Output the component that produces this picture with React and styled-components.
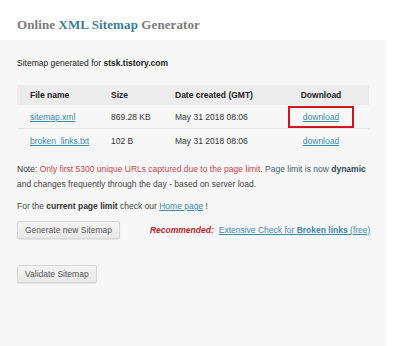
import React from "react";
import styled, { createGlobalStyle } from "styled-components";

const Global = createGlobalStyle`
  html, body { margin: 0; padding: 0; background: #fff; }
  body { font-family: "Liberation Sans", Arial, sans-serif; font-size: 8.5px; color: #333; }
`;

const Page = styled.div`
  width: 400px;
  height: 346px;
  overflow: hidden;
  display: flex;
  flex-direction: column;
`;

const Header = styled.div`
  height: 40px;
  box-sizing: border-box;
  padding: 17px 0 0 17px;
`;

const Title = styled.h1`
  margin: 0;
  font-family: "Liberation Serif", "Times New Roman", serif;
  font-weight: bold;
  font-size: 13px;
  line-height: 16px;
  color: #7a7a7a;
  letter-spacing: 0.1px;
`;

const TitleAccent = styled.span`
  color: #3b7d99;
`;

const Panel = styled.div`
  width: 386px;
  flex: 1;
  background: #f7f7f7;
  box-sizing: border-box;
  padding: 16px 17px 0 17px;
`;

const Intro = styled.p`
  margin: 0 0 15px 0;
  color: #222;
  line-height: 14px;
`;

const Table = styled.table`
  width: 352px;
  table-layout: fixed;
  border-collapse: collapse;
  margin-bottom: 10px;
`;

const Th = styled.th`
  background: #ececec;
  height: 20px;
  padding: 0 0 0 ${(p) => p.$pl || 0}px;
  text-align: ${(p) => (p.$center ? "center" : "left")};
  font-weight: bold;
  color: #222;
  width: ${(p) => (p.$w ? `${p.$w}px` : "auto")};
`;

const Td = styled.td`
  height: 23px;
  padding: 0 0 0 ${(p) => p.$pl || 0}px;
  text-align: ${(p) => (p.$center ? "center" : "left")};
  color: #333;
  white-space: nowrap;
  border-bottom: ${(p) => (p.$last ? "none" : "1px solid #e6e6e6")};
`;

const Link = styled.a`
  color: #3a8aa8;
  text-decoration: underline;
  cursor: pointer;
`;

const Highlight = styled.span`
  display: inline-block;
  border: 2.5px solid #d0161f;
  padding: 4px 13px 4px;
  line-height: 10px;
`;

const Para = styled.p`
  margin: 0 0 ${(p) => p.$mb || 0}px 0;
  line-height: 14.5px;
  color: #444;
`;

const Red = styled.span`
  color: #c4454a;
`;

const Slate = styled.span`
  color: #3f5d69;
`;

const Strong = styled.b`
  color: ${(p) => p.$c || "#333"};
`;

const ActionRow = styled.div`
  display: flex;
  align-items: center;
  margin-top: 7px;
`;

const Button = styled.button`
  font-family: "Liberation Sans", Arial, sans-serif;
  font-size: 8.5px;
  color: #555;
  white-space: nowrap;
  background: linear-gradient(#f4f4f4, #e8e8e8);
  border: 1px solid #d6d6d6;
  border-radius: 2px;
  height: 18px;
  padding: 0 7px;
  box-shadow: 0 1px 1px rgba(0, 0, 0, 0.08);
`;

const Recommend = styled.div`
  margin-left: 30px;
  display: flex;
  gap: 5px;
  white-space: nowrap;
`;

const RedBold = styled.i`
  color: #b5252d;
  font-weight: bold;
`;

const Spacer = styled.div`
  height: 26px;
`;

export default function App() {
  return (
    <Page>
      <Global />
      <Header>
        <Title>
          Online <TitleAccent>XML Sitemap</TitleAccent> Generator
        </Title>
      </Header>
      <Panel>
        <Intro>
          Sitemap generated for <b>stsk.tistory.com</b>
        </Intro>
        <Table>
          <thead>
            <tr>
              <Th $pl={13} $w={81}>File name</Th>
              <Th $w={64}>Size</Th>
              <Th $w={98}>Date created (GMT)</Th>
              <Th $center>Download</Th>
            </tr>
          </thead>
          <tbody>
            <tr>
              <Td $pl={13}><Link>sitemap.xml</Link></Td>
              <Td>869.28 KB</Td>
              <Td>May 31 2018 08:06</Td>
              <Td $center>
                <Highlight><Link>download</Link></Highlight>
              </Td>
            </tr>
            <tr>
              <Td $pl={13} $last><Link>broken_links.txt</Link></Td>
              <Td $last>102 B</Td>
              <Td $last>May 31 2018 08:06</Td>
              <Td $center $last><Link>download</Link></Td>
            </tr>
          </tbody>
        </Table>
        <Para $mb={8}>
          <Strong as="span" $c="#333">Note:</Strong>{" "}
          <Red>Only first 5300 unique URLs captured due to the page limit.</Red>{" "}
          <Slate>Page limit is now <Strong $c="#2d4a55">dynamic</Strong></Slate>{" "}
          and changes frequently through the day - based on server load.
        </Para>
        <Para>
          For the <Strong>current page limit</Strong> check our <Link>Home page</Link> !
        </Para>
        <ActionRow>
          <Button>Generate new Sitemap</Button>
          <Recommend>
            <RedBold>Recommended:</RedBold>
            <Link>
              Extensive Check for <b>Broken links</b> (free)
            </Link>
          </Recommend>
        </ActionRow>
        <Spacer />
        <Button>Validate Sitemap</Button>
      </Panel>
    </Page>
  );
}
